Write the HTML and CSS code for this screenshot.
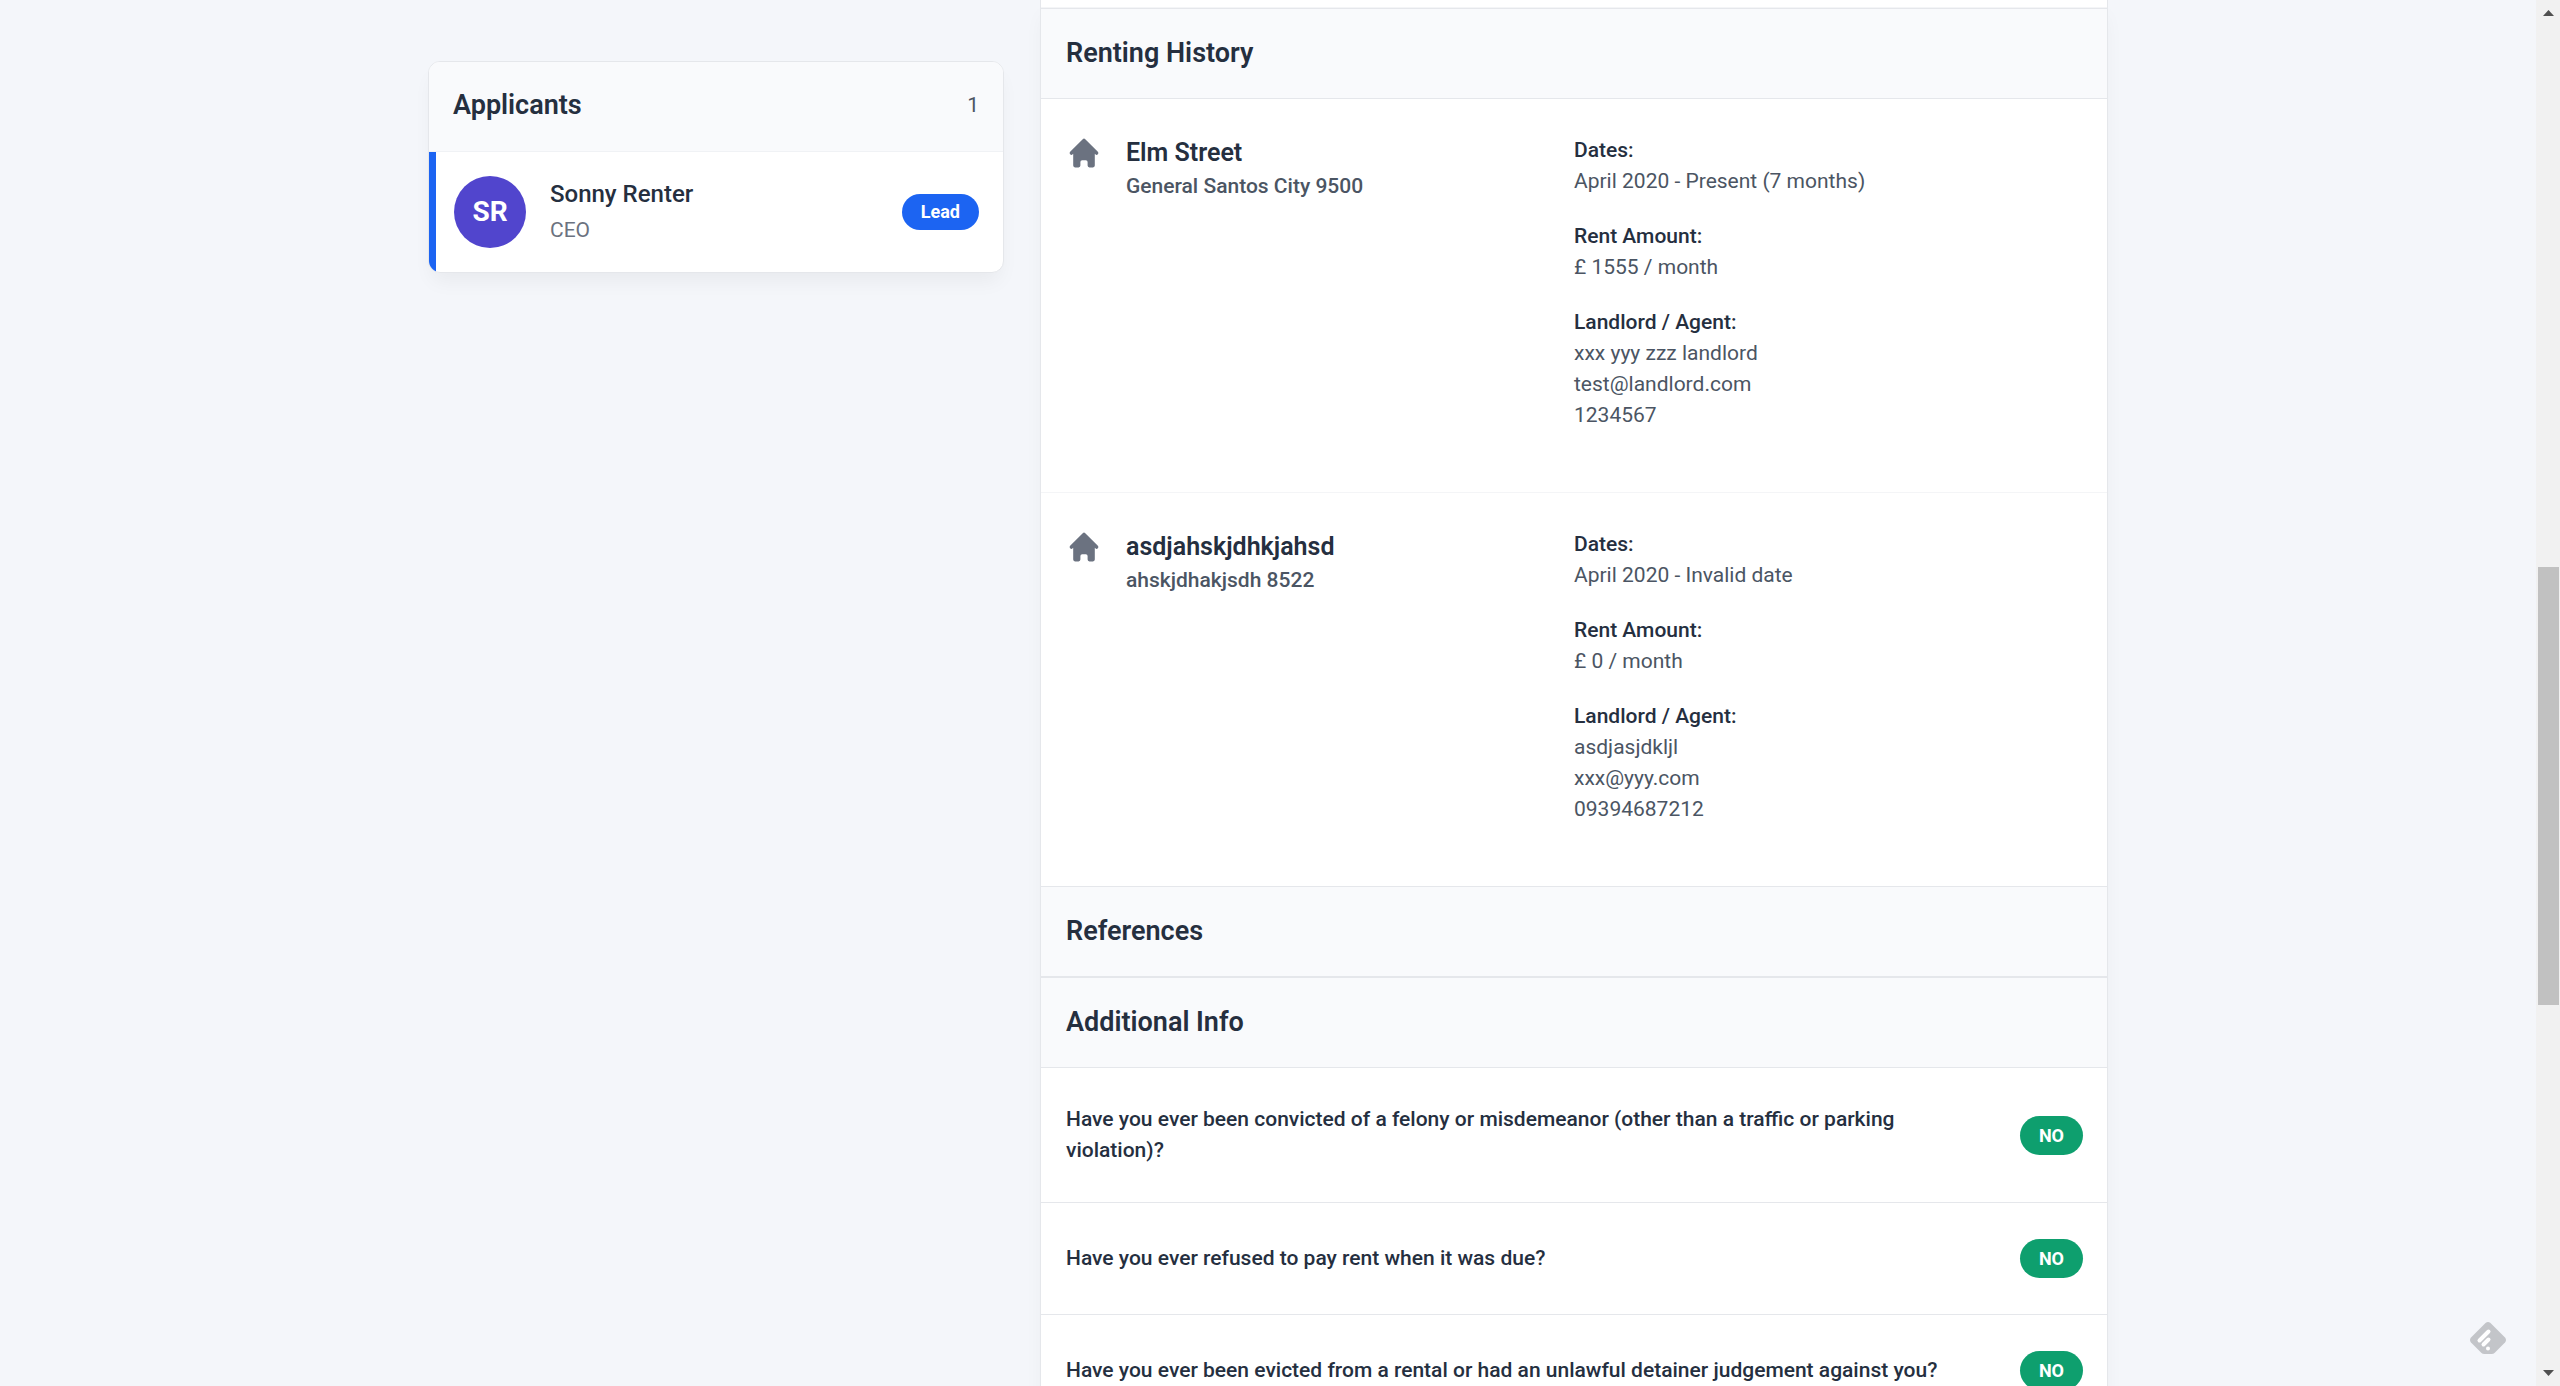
FILE: index.html
```html
<!DOCTYPE html>
<html lang="en">
<head>
  <meta charset="utf-8">
  <title>Rental Application</title>
  <link rel="stylesheet" href="styles.css">
</head>
<body>
  <svg class="symbols" aria-hidden="true">
    <symbol id="icon-home" viewBox="0 0 20 20">
      <path d="M10.707 2.293a1 1 0 00-1.414 0l-7 7a1 1 0 001.414 1.414L4 10.414V17a1 1 0 001 1h2a1 1 0 001-1v-2a1 1 0 011-1h2a1 1 0 011 1v2a1 1 0 001 1h2a1 1 0 001-1v-6.586l.293.293a1 1 0 001.414-1.414l-7-7z"/>
    </symbol>
  </svg>

  <div class="viewport">
    <div class="layout">
      <aside class="card applicants">
        <header class="card-header">
          <h2 class="card-title">Applicants</h2>
          <span class="count">1</span>
        </header>
        <div class="applicant">
          <span class="avatar">SR</span>
          <div class="applicant-text">
            <p class="applicant-name">Sonny Renter</p>
            <p class="applicant-role">CEO</p>
          </div>
          <span class="badge badge-lead">Lead</span>
        </div>
      </aside>

      <main class="card details">
        <div class="previous-section"></div>

        <section>
          <header class="section-header"><h2 class="card-title">Renting History</h2></header>
          <article class="rental">
            <div class="property">
              <svg class="home-icon" aria-hidden="true"><use href="#icon-home"/></svg>
              <div>
                <h3 class="street">Elm Street</h3>
                <p class="city">General Santos City 9500</p>
              </div>
            </div>
            <dl class="facts">
              <dt>Dates:</dt>
              <dd>April 2020 - Present (7 months)</dd>
              <dt>Rent Amount:</dt>
              <dd>£ 1555 / month</dd>
              <dt>Landlord / Agent:</dt>
              <dd>xxx yyy zzz landlord</dd>
              <dd>test@landlord.com</dd>
              <dd>1234567</dd>
            </dl>
          </article>
          <article class="rental">
            <div class="property">
              <svg class="home-icon" aria-hidden="true"><use href="#icon-home"/></svg>
              <div>
                <h3 class="street">asdjahskjdhkjahsd</h3>
                <p class="city">ahskjdhakjsdh 8522</p>
              </div>
            </div>
            <dl class="facts">
              <dt>Dates:</dt>
              <dd>April 2020 - Invalid date</dd>
              <dt>Rent Amount:</dt>
              <dd>£ 0 / month</dd>
              <dt>Landlord / Agent:</dt>
              <dd>asdjasjdkljl</dd>
              <dd>xxx@yyy.com</dd>
              <dd>09394687212</dd>
            </dl>
          </article>
        </section>

        <section>
          <header class="section-header"><h2 class="card-title">References</h2></header>
        </section>

        <section>
          <header class="section-header"><h2 class="card-title">Additional Info</h2></header>
          <div class="question">
            <p class="question-text">Have you ever been convicted of a felony or misdemeanor (other than a traffic or parking violation)?</p>
            <span class="badge badge-no">NO</span>
          </div>
          <div class="question">
            <p class="question-text">Have you ever refused to pay rent when it was due?</p>
            <span class="badge badge-no">NO</span>
          </div>
          <div class="question">
            <p class="question-text">Have you ever been evicted from a rental or had an unlawful detainer judgement against you?</p>
            <span class="badge badge-no">NO</span>
          </div>
        </section>
      </main>
    </div>

    <button class="feedly" type="button" aria-label="Follow on Feedly">
      <svg viewBox="0 0 36 32" aria-hidden="true">
        <path class="feedly-shape" d="M15.500 1Q18 -1 20.500 1L35 15.500Q37 18 35 20.500L25 30.500Q23.500 32 21.500 32H14.500Q12.500 32 11 30.500L1 20.500Q-1 18 1 15.500Z"/>
        <path class="feedly-lines" d="M9.500 18.500L18.500 9.500M13.500 22.500L18.500 17.500M18 26.500V26.500"/>
      </svg>
    </button>
  </div>

  <div class="scrollbar" aria-hidden="true">
    <svg class="arrow" viewBox="0 0 24 24"><path d="M7 16L12.500 10L18 16Z"/></svg>
    <div class="track"><div class="thumb"></div></div>
    <svg class="arrow" viewBox="0 0 24 24"><path d="M7 8L12.500 14L18 8Z"/></svg>
  </div>
</body>
</html>
```
FILE: styles.css
```css
* {
  box-sizing: border-box;
}

body {
  display: flex;
  height: 100vh;
  margin: 0;
  overflow: hidden;
  background: #f4f6fa;
  color: #252f3f;
  font-family: Roboto, "Liberation Sans", sans-serif;
  font-size: 21px;
  line-height: 31px;
}

h2,
h3,
p,
dl,
dd {
  margin: 0;
}

.symbols {
  position: absolute;
  width: 0;
  height: 0;
}

.viewport {
  position: relative;
  flex: 1;
  overflow: hidden;
}

.layout {
  display: flex;
  align-items: flex-start;
  gap: 36px;
  max-width: 1680px;
  margin: 0 auto;
}

/* Cards */

.card {
  border: 1px solid #e5e7eb;
  background: #fff;
  box-shadow: 0 12px 20px -4px rgba(0, 0, 0, 0.05);
}

.card-title {
  font-size: 27px;
  font-weight: 600;
  line-height: 36px;
}

.card-header,
.section-header {
  display: flex;
  align-items: center;
  justify-content: space-between;
  padding: 26px 25px 27px;
  background: #f9fafc;
}

.card-header {
  padding: 25px 24px 28px;
  border-bottom: 1px solid #f0f2f5;
}

.section-header {
  border-top: 1px solid #e5e7eb;
  border-bottom: 1px solid #e5e7eb;
}

/* Applicants */

.applicants {
  flex: 0 0 576px;
  margin-top: 61px;
  overflow: hidden;
  border-radius: 12px;
}

.count {
  color: #4b5563;
}

.applicant {
  display: flex;
  align-items: center;
  gap: 24px;
  padding: 24px 24px 24px 18px;
  border-left: 7px solid #1c64f2;
}

.avatar {
  width: 72px;
  border-radius: 50%;
  background: #5145cd;
  color: #fff;
  font-size: 28px;
  font-weight: 700;
  line-height: 72px;
  text-align: center;
}

.applicant-text {
  flex: 1;
  line-height: 36px;
}

.applicant-name {
  font-size: 24px;
  font-weight: 500;
}

.applicant-role {
  color: #6b7280;
}

.badge {
  flex: none;
  padding: 0 19px;
  border-radius: 20px;
  color: #fff;
  font-size: 18px;
  font-weight: 700;
}

.badge-lead {
  background: #1c64f2;
  line-height: 36px;
}

.badge-no {
  background: #0e9f6e;
  line-height: 39px;
}

/* Application details */

.details {
  flex: 1;
  border-top: 0;
}

.previous-section {
  height: 8px;
  border-bottom: 1px solid #f4f5f7;
}

.rental {
  display: grid;
  grid-template-columns: 1fr 1fr;
  padding: 36px 25px 37px;
  border-bottom: 1px solid #f4f5f7;
}

.rental:last-child {
  border-bottom: 0;
}

.property {
  display: flex;
  align-items: flex-start;
  gap: 24px;
}

.home-icon {
  width: 36px;
  height: 36px;
  fill: #6b7280;
}

.street {
  font-size: 25px;
  font-weight: 600;
  line-height: 36px;
}

.city {
  color: #4b5563;
  font-weight: 500;
}

.facts {
  padding-bottom: 24px;
}

.facts dt {
  font-weight: 500;
}

.facts dd {
  color: #4b5563;
}

.facts dd + dt {
  margin-top: 24px;
}

.question {
  display: flex;
  align-items: center;
  justify-content: space-between;
  gap: 48px;
  padding: 36px 24px 36px 25px;
  border-bottom: 1px solid #e5e7eb;
}

.question-text {
  font-weight: 500;
}

/* Floating button */

.feedly {
  position: absolute;
  right: 30px;
  bottom: 32px;
  width: 36px;
  height: 32px;
  padding: 0;
  border: 0;
  background: none;
}

.feedly svg {
  display: block;
}

.feedly-shape {
  fill: #c3c5c9;
}

.feedly-lines {
  fill: none;
  stroke: #fff;
  stroke-width: 4;
  stroke-linecap: round;
}

/* Scrollbar */

.scrollbar {
  display: flex;
  flex: 0 0 24px;
  flex-direction: column;
  background: #f1f1f1;
}

.arrow {
  width: 24px;
  height: 24px;
  fill: #505050;
}

.track {
  flex: 1;
  padding: 0 1px 0 2px;
}

.thumb {
  height: 438px;
  margin-top: 543px;
  background: #c1c1c1;
}
```
